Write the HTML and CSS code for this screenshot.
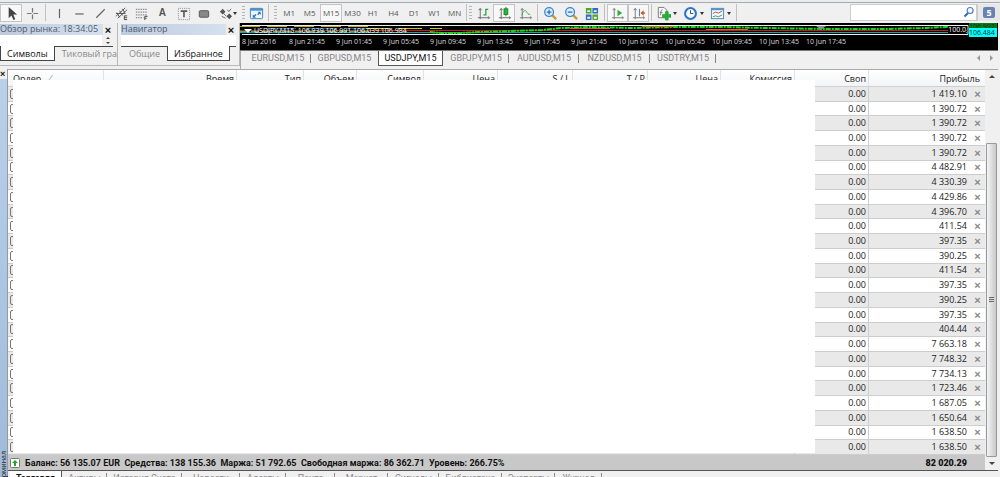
FILE: index.html
```html
<!DOCTYPE html>
<html lang="ru">
<head>
<meta charset="utf-8">
<title>Торговый терминал</title>
<link rel="stylesheet" href="styles.css">
</head>
<body>
<header class="toolbar">
  <div class="group g-cursor">
    <button class="on" aria-label="Курсор"><svg viewBox="0 0 16 16"><path d="M5 1v12l3-3 2 5 2-1-2-5h4z" fill="#444"/></svg></button>
    <button aria-label="Перекрестие"><svg viewBox="0 0 16 16"><path d="M8 2v5M8 9v5M2 8h5M9 8h5" stroke="#777" stroke-width="1.3"/></svg></button>
  </div>
  <i class="sep wide"></i>
  <div class="group g-draw">
    <button aria-label="Вертикальная линия"><svg viewBox="0 0 16 16"><path d="M8 3v10" stroke="#666" stroke-width="1.300"/></svg></button>
    <button aria-label="Горизонтальная линия"><svg viewBox="0 0 16 16"><path d="M3.500 8.500h9" stroke="#666" stroke-width="1.300"/></svg></button>
    <button aria-label="Трендовая линия"><svg viewBox="0 0 16 16"><path d="M3.500 12.500l9-9" stroke="#666" stroke-width="1.300"/></svg></button>
    <button aria-label="Канал"><svg viewBox="0 0 16 16"><path d="M2 11l10-9M4 13l10-9M3 7l3 5M6 5l3 5M9 3l3 5M2 8h10" stroke="#555" fill="none"/><path d="M14 10.500h-3v4h3M11 12.500h3" stroke="#444" fill="none"/></svg></button>
    <button aria-label="Фибоначчи"><svg viewBox="0 0 16 16"><path d="M2 3.500h12M2 6.500h12M2 9.500h12M2 12.500h8" stroke="#666" stroke-dasharray="1.500 1"/><path d="M11.500 15v-4h3M11.500 13h2" stroke="#444" fill="none"/></svg></button>
    <button aria-label="Текст" class="letter">A</button>
    <button aria-label="Текстовая метка"><svg viewBox="0 0 16 16"><rect x="2.500" y="2.500" width="12" height="12" fill="none" stroke="#888" stroke-dasharray="1 1"/><path d="M5 5.500h7M8.500 5v7" stroke="#555" stroke-width="1.700"/></svg></button>
    <button aria-label="Прямоугольник"><svg viewBox="0 0 16 16"><rect x="3.500" y="5" width="10" height="7" rx="1" fill="#888" stroke="#555"/></svg></button>
  </div>
  <div class="group g-arrows">
    <button aria-label="Стрелки" class="drop"><svg viewBox="0 0 16 16"><path d="M2 6l3-3 3 3-3 3zM9 11l3-3 3 3-3 3z" fill="#555"/><path d="M5 7l4 4M10 4l1.500 2 2.500-3M4 11l4 2" stroke="#666" fill="none"/></svg></button>
  </div>
  <i class="grip"></i>
  <div class="group g-full">
    <button aria-label="Полный экран"><svg viewBox="0 0 16 16"><rect x="1.500" y="2.500" width="13" height="11" rx="1" fill="#eef6fd" stroke="#3d7fbd"/><path d="M1 2.500h14v2.500H1z" fill="#4a90cf"/><path d="M4 12.500V9l1.200 1.200L7 8.500 8 9.500l-1.800 1.800 1.200 1.200zM12.500 6v3.500l-1.200-1.200L9.800 9.800l-1-1 1.500-1.500L9 6z" fill="#2f74b5"/></svg></button>
  </div>
  <i class="sep wide"></i><i class="grip"></i>
  <div class="group g-time">
    <button>M1</button><button>M5</button><button class="on">M15</button><button>M30</button><button>H1</button><button>H4</button><button>D1</button><button>W1</button><button>MN</button>
  </div>
  <i class="sep thin"></i><i class="grip thin"></i>
  <div class="group g-three">
    <button aria-label="Бары"><svg viewBox="0 0 16 16"><path d="M4.500 3v11M2 12.500h12M3 4.500l1.500-2 1.500 2M13 11l1.500 1.500L13 14" stroke="#666" fill="none"/><path d="M8 9.500h2.500V3.500H13M10.500 3v7" stroke="#2a9a3a" fill="none" stroke-width="1.300"/></svg></button>
    <button class="on" aria-label="Свечи"><svg viewBox="0 0 16 16"><path d="M4.500 3v11M2 12.500h12M3 4.500l1.500-2 1.500 2M13 11l1.500 1.500L13 14" stroke="#666" fill="none"/><path d="M9.500 1v10" stroke="#178a27"/><rect x="7.500" y="3" width="4" height="6" fill="#27b53c" stroke="#178a27"/></svg></button>
    <button aria-label="Линия"><svg viewBox="0 0 16 16"><path d="M4.500 3v11M2 12.500h12M3 4.500l1.500-2 1.500 2M13 11l1.500 1.500L13 14" stroke="#777" fill="none"/><path d="M4 10C6 4 8 4 9 6s2 3 4 3" stroke="#3aa74b" fill="none"/></svg></button>
  </div>
  <i class="sep"></i>
  <div class="group g-three">
    <button aria-label="Увеличить"><svg viewBox="0 0 16 16"><path d="M10 10l4 4" stroke="#c89b2e" stroke-width="2.500"/><circle cx="6.500" cy="6.500" r="4.700" fill="#dceefc" stroke="#3b82c8" stroke-width="1.300"/><path d="M4 6.500h5M6.500 4v5" stroke="#2d73bb" stroke-width="1.400"/></svg></button>
    <button aria-label="Уменьшить"><svg viewBox="0 0 16 16"><path d="M10 10l4 4" stroke="#c89b2e" stroke-width="2.500"/><circle cx="6.500" cy="6.500" r="4.700" fill="#dceefc" stroke="#3b82c8" stroke-width="1.300"/><path d="M4 6.500h5" stroke="#2d73bb" stroke-width="1.400"/></svg></button>
    <button aria-label="Расположить окна"><svg viewBox="0 0 16 16"><path d="M2 2h6v6H2zM9 9h6v6H9z" fill="#4fa62c"/><path d="M9 2h6v6H9zM2 9h6v6H2z" fill="#2f6fc0"/><path d="M3.500 4.500h3v2h-3zM10.500 4.500h3v2h-3zM3.500 11.500h3v2h-3zM10.500 11.500h3v2h-3z" fill="#eef7ff"/></svg></button>
  </div>
  <i class="sep"></i>
  <div class="group g-two">
    <button class="on" aria-label="Автопрокрутка"><svg viewBox="0 0 16 16"><path d="M4.500 3v11M2 12.500h12M3 4.500l1.500-2 1.500 2M13 11l1.500 1.500L13 14" stroke="#777" fill="none"/><path d="M8 4l5 3.500L8 11z" fill="#2cab42"/></svg></button>
    <button class="on" aria-label="Сдвиг графика"><svg viewBox="0 0 16 16"><path d="M4.500 3v11M2 12.500h12M3 4.500l1.500-2 1.500 2M13 11l1.500 1.500L13 14" stroke="#777" fill="none"/><path d="M9 3v8" stroke="#3f74b5"/><path d="M15 7.500h-3" stroke="#d2572c" stroke-width="1.500"/><path d="M10 7.500l3.500-3v6z" fill="#d2572c"/></svg></button>
  </div>
  <i class="sep"></i>
  <div class="group g-menus">
    <button class="drop" aria-label="Индикаторы"><svg viewBox="0 0 16 16"><path d="M2.500 1.500h6l3 3v8h-9z" fill="#fafafa" stroke="#777"/><path d="M7 4q-2 0-2 3v3M4 7h3" stroke="#777" fill="none"/><path d="M7 9h3V6h3v3h3v3h-3v3h-3v-3H7z" fill="#22b437" stroke="#168726" stroke-width=".6"/></svg></button>
    <button class="drop" aria-label="Периоды"><svg viewBox="0 0 16 16"><circle cx="8" cy="8" r="5.800" fill="#f4faff" stroke="#2d76c4" stroke-width="2.200"/><path d="M8 4.500V8h3" stroke="#444" fill="none"/></svg></button>
    <button class="drop" aria-label="Шаблоны"><svg viewBox="0 0 16 16"><rect x="1.500" y="2.500" width="13" height="11" fill="#f5faff" stroke="#4c83b8"/><path d="M1 2.500h14v2H1z" fill="#5893c9"/><path d="M3 8l3-1.500 3 1 4-2" stroke="#b54c3a" fill="none"/><path d="M3 11.500l3-1 3 1 4-2" stroke="#3d9a52" fill="none"/></svg></button>
  </div>
  <i class="sep thin"></i>
  <div class="search">
    <input type="text" aria-label="Поиск">
    <svg viewBox="0 0 16 16"><path d="M7 9l-5 5" stroke="#3267b8" stroke-width="2.500"/><circle cx="9.500" cy="6" r="4" fill="#f3f8ff" stroke="#4d7dc4" stroke-width="1.500"/></svg>
  </div>
  <button class="chat" aria-label="Сообщения"><span>5</span></button>
</header>

<div class="upper">
  <aside class="pane market">
    <div class="pane-title"><span>Обзор рынка: 18:34:05</span><button aria-label="Закрыть">×</button></div>
    <div class="pane-body"><span class="spin"><i></i><i class="down"></i></span></div>
    <nav class="pane-tabs"><button class="active">Символы</button><button>Тиковый гра</button></nav>
  </aside>
  <aside class="pane navigator">
    <div class="pane-title"><span>Навигатор</span><button aria-label="Закрыть">×</button></div>
    <div class="pane-body"></div>
    <nav class="pane-tabs"><button>Общие</button><button class="active">Избранное</button></nav>
  </aside>
  <main class="work">
    <section class="chart">
      <div class="plot">
        <svg class="lines" viewBox="0 0 758 14" preserveAspectRatio="none">
          <path d="M2 2.500h726v9H2" stroke="#eee" fill="none"/>
          <path d="M0 3.500h130" stroke="#b9b529" stroke-dasharray="20 7"/>
          <path d="M126 5.500h76" stroke="#cccc20" stroke-dasharray="24 8"/>
          <path d="M26 5.500h100" stroke="#164db8" stroke-dasharray="30 10"/>
          <path d="M0 7.500h728" stroke="#c8191c"/>
          <path d="M0 9.500h728" stroke="#11a9a5"/>
          <path d="M0 8.500h130" stroke="#1bc96a" stroke-dasharray="8 3"/>
          <path d="M190 9l12 1 18 0 20-1 32-1 30-1 20-2 28-1 42 1 44-1 46 0 44 1 60 1 60 0 40-1 20-1 18 1" stroke="#14dc18" stroke-width="2" fill="none" stroke-dasharray="5 1 2 1"/>
          <path d="M330 5.500h40M402 3.500h32M466 6.500h42" stroke="#d8681c"/>
          <path d="M576 3h10l-5 4z" fill="#879097"/>
          <path d="M4 6h8l-4 4z" fill="#fff"/>
        </svg>
        <span class="quote">USDJPY,M15&nbsp; 106.939 106.991 106.039 106.984</span>
        <span class="fibo">100.0</span>
        <div class="prices"><span class="ask">106.992</span><span class="bid">106.484</span></div>
      </div>
      <div class="times"><span>8 Jun 2016</span><span>8 Jun 21:45</span><span>9 Jun 01:45</span><span>9 Jun 05:45</span><span>9 Jun 09:45</span><span>9 Jun 13:45</span><span>9 Jun 17:45</span><span>9 Jun 21:45</span><span>10 Jun 01:45</span><span>10 Jun 05:45</span><span>10 Jun 09:45</span><span>10 Jun 13:45</span><span>10 Jun 17:45</span></div>
    </section>
    <nav class="chart-tabs">
      <button>EURUSD,M15</button><button>GBPUSD,M15</button><button class="active">USDJPY,M15</button><button>GBPJPY,M15</button><button>AUDUSD,M15</button><button>NZDUSD,M15</button><button>USDTRY,M15</button>
      <span class="scroll-tabs"><i></i><i class="right"></i></span>
    </nav>
  </main>
</div>

<section class="terminal">
  <div class="side"><button aria-label="Закрыть">×</button><div class="side-label"><span>Терминал</span></div></div>
  <div class="content">
    <div class="table-area">
      <div class="table-wrap">
        <table>
          <colgroup><col class="c1"><col class="c2"><col class="c3"><col class="c4"><col class="c5"><col class="c6"><col class="c7"><col class="c8"><col class="c9"><col class="c10"><col class="c11"><col></colgroup>
          <thead><tr><th class="order">Ордер <em>⁄</em></th><th>Время</th><th>Тип</th><th>Объем</th><th>Символ</th><th>Цена</th><th>S / L</th><th>T / P</th><th>Цена</th><th>Комиссия</th><th>Своп</th><th>Прибыль</th></tr></thead>
          <tbody>
            <tr><td colspan="10"><i></i></td><td>0.00</td><td>1 419.10<button>×</button></td></tr>
            <tr><td colspan="10"><i></i></td><td>0.00</td><td>1 390.72<button>×</button></td></tr>
            <tr><td colspan="10"><i></i></td><td>0.00</td><td>1 390.72<button>×</button></td></tr>
            <tr><td colspan="10"><i></i></td><td>0.00</td><td>1 390.72<button>×</button></td></tr>
            <tr><td colspan="10"><i></i></td><td>0.00</td><td>1 390.72<button>×</button></td></tr>
            <tr><td colspan="10"><i></i></td><td>0.00</td><td>4 482.91<button>×</button></td></tr>
            <tr><td colspan="10"><i></i></td><td>0.00</td><td>4 330.39<button>×</button></td></tr>
            <tr><td colspan="10"><i></i></td><td>0.00</td><td>4 429.86<button>×</button></td></tr>
            <tr><td colspan="10"><i></i></td><td>0.00</td><td>4 396.70<button>×</button></td></tr>
            <tr><td colspan="10"><i></i></td><td>0.00</td><td>411.54<button>×</button></td></tr>
            <tr><td colspan="10"><i></i></td><td>0.00</td><td>397.35<button>×</button></td></tr>
            <tr><td colspan="10"><i></i></td><td>0.00</td><td>390.25<button>×</button></td></tr>
            <tr><td colspan="10"><i></i></td><td>0.00</td><td>411.54<button>×</button></td></tr>
            <tr><td colspan="10"><i></i></td><td>0.00</td><td>397.35<button>×</button></td></tr>
            <tr><td colspan="10"><i></i></td><td>0.00</td><td>390.25<button>×</button></td></tr>
            <tr><td colspan="10"><i></i></td><td>0.00</td><td>397.35<button>×</button></td></tr>
            <tr><td colspan="10"><i></i></td><td>0.00</td><td>404.44<button>×</button></td></tr>
            <tr><td colspan="10"><i></i></td><td>0.00</td><td>7 663.18<button>×</button></td></tr>
            <tr><td colspan="10"><i></i></td><td>0.00</td><td>7 748.32<button>×</button></td></tr>
            <tr><td colspan="10"><i></i></td><td>0.00</td><td>7 734.13<button>×</button></td></tr>
            <tr><td colspan="10"><i></i></td><td>0.00</td><td>1 723.46<button>×</button></td></tr>
            <tr><td colspan="10"><i></i></td><td>0.00</td><td>1 687.05<button>×</button></td></tr>
            <tr><td colspan="10"><i></i></td><td>0.00</td><td>1 650.64<button>×</button></td></tr>
            <tr><td colspan="10"><i></i></td><td>0.00</td><td>1 638.50<button>×</button></td></tr>
            <tr><td colspan="10"><i></i></td><td>0.00</td><td>1 638.50<button>×</button></td></tr>
          </tbody>
        </table>
        <div class="cover"></div>
        <div class="summary">
          <svg viewBox="0 0 10 10"><rect x=".5" y=".5" width="9" height="9" rx="1" fill="#fff" stroke="#777"/><path d="M5 2l3 3H6v3H4V5H2z" fill="#1ca52b"/></svg>
          <span>Баланс: 56 135.07 EUR&nbsp; Средства: 138 155.36&nbsp; Маржа: 51 792.65&nbsp; Свободная маржа: 86 362.71&nbsp; Уровень: 266.75%</span>
          <b>82 020.29</b>
        </div>
      </div>
      <div class="scrollbar"><i class="up"></i><div class="thumb"><i></i></div><i class="down"></i></div>
    </div>
    <nav class="bottom-tabs"><button class="active">Торговля</button><button>Активы</button><button>История Счета</button><button>Новости</button><button>Алерты</button><button>Почта</button><button>Маркет</button><button>Сигналы</button><button>Библиотека</button><button>Эксперты</button><button>Журнал</button></nav>
  </div>
</section>
</body>
</html>
```

FILE: styles.css
```css
* { box-sizing: border-box; }
body {
  margin: 0; height: 100vh; overflow: hidden; display: flex; flex-direction: column;
  background: #f0f0f0; color: #222; font: 9px/12px "Open Sans", "Noto Sans", sans-serif;
}
button { border: 0; padding: 0; margin: 0; background: none; font: inherit; color: inherit; }
nav { display: flex; }

/* toolbar */
.toolbar { display: flex; flex: none; height: 23px; padding-top: 4px; background: linear-gradient(#e9edf2 0 2px, #a9a9a9 2px 3px, #f0f0f0 3px); }
.group { display: flex; flex: none; }
.group button { flex: 1; display: flex; align-items: center; justify-content: center; height: 18px; color: #555; font-size: 8px; }
.group svg { width: 15px; height: 15px; flex: none; }
.group .on { background: #f8f8f8; border: 1px solid #c4c4c4; }
.group .letter { font: bold 10px/14px "Liberation Sans", sans-serif; }
.group .drop { justify-content: flex-start; padding-left: 2px; }
.drop::after { content: ""; border: 2px solid transparent; border-top: 3px solid #333; border-bottom: 0; margin-left: 2px; }
.g-cursor { width: 42px; }
.g-draw { width: 165px; }
.g-arrows { width: 26px; }
.group.g-arrows .drop { padding-left: 4px; }
.g-arrows .drop::after { margin-left: 0; }
.g-full { width: 18px; }
.g-time { width: 186px; }
.g-three { width: 62px; }
.g-two { width: 42px; }
.g-menus { width: 81px; }
.sep { flex: none; width: 1px; margin: 0 2px; background: #c0c0c0; height: 17px; }
.wide { margin: 0 3px; }
.grip { flex: none; width: 3px; margin: 2px 2px; height: 14px; background: repeating-linear-gradient(#b4b4b4 0 1px, #f0f0f0 1px 3px); }
.thin { margin-left: 1px; margin-right: 1px; }
.search { position: relative; margin-left: auto; width: 127px; height: 17px; }
.search input { display: block; width: 100%; height: 100%; border: 1px solid #ccc; background: #fff; padding: 0 16px 0 4px; }
.search svg { position: absolute; right: 2px; top: 2px; width: 12px; height: 12px; }
.chat { width: 23px; height: 17px; display: flex; justify-content: center; align-items: center; background: #e7e7e7; border-left: 1px solid #ccc; }
.chat span { width: 12px; height: 11px; border-radius: 2px; background: #6882b4; color: #fff; font-weight: bold; line-height: 11px; }

/* panes */
.upper { display: flex; flex: none; height: 46px; }
.pane { flex: none; border-right: 1px solid #b8b8b8; border-bottom: 1px solid #b8b8b8; height: 43px; overflow: hidden; }
.market { width: 118px; padding-right: 4px; }
.navigator { width: 122px; padding: 0 3px 0 3px; }
.pane-title { display: flex; justify-content: space-between; height: 11px; margin-top: 1px; line-height: 10px; color: #4c5b70; background: linear-gradient(90deg, #bccbdd, #d8e3ef); }
.pane-title button { width: 10px; background: #eee; color: #111; font: bold 11px/10px "Liberation Sans", sans-serif; }
.pane-body { height: 12px; background: #fff; border-bottom: 1px solid #444; display: flex; justify-content: flex-end; }
.spin { width: 11px; background: #f0f0f0; display: flex; flex-direction: column; align-items: center; justify-content: space-around; }
.spin i { border: 2px solid transparent; border-bottom-color: #444; border-top: 0; }
.spin .down { transform: rotate(180deg); }
.pane-tabs button { height: 14px; line-height: 14px; padding: 0 6px 0 7px; color: #8a8a8a; white-space: nowrap; }
.pane-tabs .active { margin-top: -1px; height: 15px; line-height: 16px; padding: 0 6px; background: #fff; color: #111; border: 1px solid #444; border-top: 0; }
.navigator .pane-tabs button:first-child { width: 46px; }

/* chart */
.work { flex: 1; min-width: 0; display: flex; flex-direction: column; }
.chart { background: #000; height: 28px; margin-right: 2px; color: #ddd; font-size: 7px; border-bottom: 1px solid #777; }
.plot { position: relative; height: 14px; }
.lines { width: 100%; height: 14px; display: block; }
.quote { position: absolute; left: 14px; top: 3px; line-height: 9px; color: #fff; }
.fibo { position: absolute; right: 32px; top: 3px; line-height: 8px; background: #000; color: #fff; }
.prices { position: absolute; right: 1px; top: 0; width: 28px; display: flex; flex-direction: column; color: #003030; line-height: 9px; }
.ask { height: 5px; overflow: hidden; background: #087a12; line-height: 8px; }
.bid { background: #0ff; }
.times { display: grid; grid-template-columns: repeat(13, 47px); padding-left: 2px; line-height: 10px; white-space: nowrap; }
.chart-tabs { display: grid; grid-template-columns: 70px 67px 65px 66px 70px 71px 66px 1fr; align-items: start; height: 18px; border-left: 1px solid #aaa; line-height: 15px; font-family: Roboto, sans-serif; }
.chart-tabs button { height: 15px; color: #858585; background: linear-gradient(#858585, #858585) right 3px / 1px 9px no-repeat; }
.chart-tabs button:first-child { padding-left: 4px; }
.chart-tabs button:nth-child(2) { background: none; }
.chart-tabs .active { background: #fff; color: #111; border: 1px solid #555; border-top: 0; }
.scroll-tabs { display: flex; justify-content: flex-end; gap: 10px; padding: 4px 7px 0 0; }
.scroll-tabs i { border: 3px solid transparent; border-right-color: #999; border-left: 0; height: 6px; }
.scroll-tabs .right { border-left: 3px solid #999; border-right: 0; }

/* terminal */
.terminal { flex: 1; min-height: 0; display: flex; }
.side { width: 7px; flex: none; display: flex; flex-direction: column; }
.side button { height: 10px; width: 5px; color: #111; font: bold 9px/10px "Liberation Sans", sans-serif; }
.side-label { flex: 1; background: linear-gradient(#b9d0ea, #9fbbda); display: flex; align-items: flex-end; }
.side-label span { writing-mode: vertical-rl; transform: rotate(180deg); font-size: 7px; line-height: 7px; margin-bottom: -8px; }
.content { flex: 1; min-width: 0; display: flex; flex-direction: column; border-left: 1px solid #999; }
.table-area { display: flex; flex: 1; border-top: 1px solid #aaa; border-bottom: 1px solid #555; margin-right: 2px; min-height: 0; }
.table-wrap { flex: 1; min-width: 0; position: relative; display: flex; flex-direction: column; background: #e8e8e8; }
table { width: 100%; flex: 1; table-layout: fixed; border-collapse: separate; border-spacing: 0; background: #fff; }
.c1 { width: 96px; } .c2 { width: 133px; } .c3 { width: 67px; } .c4 { width: 53px; } .c5 { width: 67px; } .c6 { width: 74px; }
.c7 { width: 75px; } .c8 { width: 75px; } .c9 { width: 73px; } .c10 { width: 74px; } .c11 { width: 74px; }
th { height: 17px; padding: 1px 2px 0 0; font-weight: normal; text-align: right; background: linear-gradient(#fff, #f3f4f6); border-right: 1px solid #dfe3e8; border-bottom: 1px solid #d0d0d0; }
th:last-child { padding-right: 5px; }
.order { text-align: left; padding-left: 5px; }
.order em { margin-left: 6px; color: #999; }
td { height: 14px; padding: 0 2px 0 0; text-align: right; line-height: 12px; border-bottom: 1px solid #cdcdcd; border-right: 1px solid #cdcdcd; }
td:last-child, th:last-child { border-right: 0; }
tbody tr:nth-child(odd) { background: #e9e9e9; }
td i { display: block; width: 6px; height: 10px; margin-left: 2px; border: 1px solid #777; border-radius: 2px; }
td button { width: 11px; margin-left: 5px; color: #888; font: bold 11px/12px "Liberation Sans", sans-serif; vertical-align: top; }
.cover { position: absolute; left: 5px; right: 170px; top: 10px; bottom: 17px; background: #fff; }
.summary { display: flex; align-items: center; gap: 5px; height: 15px; flex: none; padding: 0 18px 0 2px; background: #c8c8c8; font-family: Roboto, sans-serif; font-weight: bold; color: #111; }
.summary svg { width: 10px; height: 10px; flex: none; }
.summary span { flex: 1; white-space: nowrap; }
.scrollbar { width: 13px; flex: none; display: flex; flex-direction: column; align-items: center; background: #f0f0f0; padding: 5px 0; }
.scrollbar > i { border: 3px solid transparent; }
.scrollbar .up { border-bottom-color: #444; border-top: 0; }
.scrollbar .down { border-top-color: #444; border-bottom: 0; margin-top: 5px; }
.thumb { width: 11px; flex: 1; margin-top: 65px; display: flex; align-items: center; justify-content: center; border: 1px solid #999; border-radius: 1px; background: linear-gradient(90deg, #f4f4f4, #c9c9cc); }
.thumb i { width: 5px; height: 6px; background: repeating-linear-gradient(#666 0 1px, #ddd 1px 2px); }
.bottom-tabs { display: grid; grid-template-columns: 52px 45px 75px 58px 46px 49px 53px 51px 63px 53px 47px; height: 6px; flex: none; overflow: hidden; padding-left: 2px; font-family: Roboto, sans-serif; }
.bottom-tabs button { height: 14px; line-height: 12px; color: #888; background: linear-gradient(#888, #888) right 2px / 1px 9px no-repeat; }
.bottom-tabs .active { background: #fff; color: #111; font-weight: bold; border-right: 1px solid #555; }
```
